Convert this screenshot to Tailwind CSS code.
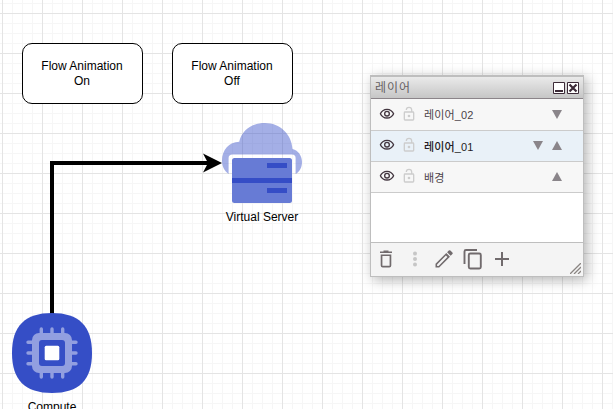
<!DOCTYPE html>
<html lang="ko">
<head>
<meta charset="utf-8">
<title>Diagram</title>
<script src="https://cdn.jsdelivr.net/npm/@tailwindcss/browser@4"></script>
</head>
<body class="w-[613px] h-[409px] overflow-hidden bg-white font-['Liberation_Sans','Noto_Sans_CJK_KR',sans-serif] text-black">
<svg width="0" height="0" class="absolute">
  <symbol id="eye" viewBox="0 0 24 24"><path d="M12 6c3.79 0 7.17 2.13 8.82 5.5C19.17 14.87 15.79 17 12 17s-7.17-2.13-8.82-5.5C4.83 8.13 8.21 6 12 6m0-2C7 4 2.73 7.11 1 11.500 2.730 15.890 7 19 12 19s9.270-3.110 11-7.500C21.270 7.110 17 4 12 4zm0 5a2.500 2.500 0 1 1 0 5 2.500 2.500 0 0 1 0-5m0-2a4.500 4.500 0 1 0 0 9 4.500 4.500 0 0 0 0-9z"/></symbol>
  <symbol id="lock" viewBox="0 0 24 24"><path d="M18 8h-1V6A5 5 0 0 0 7 6h1.900a3.100 3.100 0 0 1 6.200 0v2H6a2 2 0 0 0-2 2v10a2 2 0 0 0 2 2h12a2 2 0 0 0 2-2V10a2 2 0 0 0-2-2zm0 12H6V10h12v10zm-6-3a2 2 0 1 0 0-4 2 2 0 0 0 0 4z"/></symbol>
</svg>
<main class="relative w-[613px] h-[409px] overflow-hidden">
  <svg class="absolute inset-0" width="613" height="409">
    <defs>
      <pattern id="grid" x="2" y="13" width="40" height="40" patternUnits="userSpaceOnUse">
        <path d="M10.500 0V40M20.500 0V40M30.500 0V40M0 10.500H40M0 20.500H40M0 30.500H40" stroke="#f6f6f6"/>
        <path d="M.5 0V40M0 .5H40" stroke="#e4e4e4"/>
      </pattern>
    </defs>
    <rect width="613" height="409" fill="url(#grid)"/>
    <path d="M52 314V163H210" fill="none" stroke="#000" stroke-width="4"/>
    <path d="M222 163L203 172.500L208 163L203 153.500Z"/>
    <path d="M228.600 174C224.500 171 222 167 222 160.500C222 150 229 142 239.200 141.700C242 130 252 123 265 123C280 123 291.500 134 292.500 149C298.500 150.500 302 156 302 162C302 167.500 299.500 172 295.600 174V158Q295.600 154.500 292 154.500H232.500Q228.600 154.500 228.600 158Z" fill="#3850c8" fill-opacity=".46"/>
    <rect x="232" y="158" width="60" height="45" rx="2.500" fill="#677bd5"/>
    <path d="M232 178h60v5h-60zM267 163h20v5h-20zM267 188h20v5h-20z" fill="#354dc6"/>
    <path d="M52 313C79 313 92 326 92 353S79 393 52 393S12 380 12 353S25 313 52 313Z" fill="#354ec6"/>
    <path d="M41.300 329V377M52 329V377M62.700 329V377M28 342.300H76M28 353H76M28 363.700H76" stroke="#929fe0" stroke-width="3.400" stroke-linecap="round"/>
    <rect x="32" y="333" width="40" height="40" rx="7" fill="#929fe0"/>
    <rect x="39" y="340" width="26" height="26" rx="3" fill="#354ec6"/>
    <rect x="44.700" y="345.700" width="14.600" height="14.600" rx="1.500" fill="#fff"/>
  </svg>

  <div class="absolute left-[22px] top-[43px] w-[121px] h-[61px] rounded-[10px] border border-black bg-white flex items-center justify-center text-center text-[12px] leading-[15px] pr-[1px]">Flow Animation<br>On</div>
  <div class="absolute left-[172px] top-[43px] w-[121px] h-[61px] rounded-[10px] border border-black bg-white flex items-center justify-center text-center text-[12px] leading-[15px] pr-[1px]">Flow Animation<br>Off</div>
  <div class="absolute left-[212px] top-[210px] w-[100px] text-center text-[12px] leading-[15px]">Virtual Server</div>
  <div class="absolute left-[2px] top-[400px] w-[100px] text-center text-[12px] leading-[15px]">Compute</div>

  <section class="absolute left-[370px] top-[75px] w-[214px] h-[202px] flex flex-col border border-[#bebebe] border-t-2 bg-white shadow-[3px_3px_12px_rgba(0,0,0,0.3)]">
    <header class="h-[22px] shrink-0 flex items-center pl-[4px] pr-[4px] border-b border-[#8b8489] bg-linear-to-b from-[#eaeaea] to-[#c6c6c6] text-[12px] text-[#665f63]">
      <span class="grow leading-[20px] tracking-[1px] mt-px">레이어</span>
      <svg width="26" height="12" viewBox="0 0 26 12" fill="none" stroke="#3d2b38">
        <path d="M.5 .5h11v11H.5zM14.500 .5h11v11h-11z" fill="#fff"/>
        <path d="M2 9h8" stroke-width="2"/>
        <path d="M16.500 2.500l7 7M23.500 2.500l-7 7" stroke-width="2.200"/>
      </svg>
    </header>
    <div class="h-[32px] shrink-0 flex items-center border-b border-[#cbcbcb] bg-[#f7f7f7] text-[11px] text-[#4c4349]">
      <svg class="ml-[8px] mb-px size-4 fill-[#42353f]"><use href="#eye"/></svg>
      <svg class="ml-[6px] mb-[2px] size-4 fill-[#cdcdcd]"><use href="#lock"/></svg>
      <span class="ml-[7px] mt-[2px] grow tracking-[.15px]">레이어_02</span>
      <svg class="mr-[21px] mb-px" width="10" height="9"><path d="M0 0H10L5 9Z" fill="#8a858a"/></svg>
    </div>
    <div class="h-[31px] shrink-0 flex items-center border-b border-[#cbcbcb] bg-[#e9f1f8] text-[11px] text-[#251c25] font-medium">
      <svg class="ml-[8px] mb-[2px] size-4 fill-[#42353f]"><use href="#eye"/></svg>
      <svg class="ml-[6px] mb-[2px] size-4 fill-[#cdcdcd]"><use href="#lock"/></svg>
      <span class="ml-[7px] mt-[2px] grow tracking-[.15px]">레이어_01</span>
      <svg class="mr-[9px] mb-[2px]" width="10" height="9"><path d="M0 0H10L5 9Z" fill="#8a858a"/></svg>
      <svg class="mr-[21px] mb-[2px]" width="10" height="9"><path d="M0 9H10L5 0Z" fill="#8a858a"/></svg>
    </div>
    <div class="h-[31px] shrink-0 flex items-center border-b border-[#cbcbcb] bg-[#f7f7f7] text-[11px] text-[#4c4349]">
      <svg class="ml-[8px] mb-[2px] size-4 fill-[#42353f]"><use href="#eye"/></svg>
      <svg class="ml-[6px] mb-[2px] size-4 fill-[#cdcdcd]"><use href="#lock"/></svg>
      <span class="ml-[7px] mt-[2px] grow tracking-[.15px]">배경</span>
      <svg class="mr-[21px] mb-[2px]" width="10" height="9"><path d="M0 9H10L5 0Z" fill="#8a858a"/></svg>
    </div>
    <div class="grow"></div>
    <footer class="relative h-[34px] shrink-0 flex items-center border-t border-[#bebebe] bg-[#f4f4f4]">
      <svg width="148" height="33" fill="#716b6d">
        <path d="M9 10V8.500h3.500V7.500h5v1H21v1.500zM9.700 11.500h10.600v11q0 2-2 2h-6.600q-2 0-2-2zm1.700 1.600v9.700h7.200v-9.700z"/>
        <g fill="#c6c6c6"><circle cx="44" cy="10.500" r="2"/><circle cx="44" cy="16" r="2"/><circle cx="44" cy="21.500" r="2"/></g>
        <path fill-rule="evenodd" d="M64.500 24.500v-3.700L75.300 10l3.700 3.700L68.200 24.500zm1.600-1.600h1.500l8.800-8.800-1.500-1.500-8.800 8.800zM76.100 9.200l1.700-1.700q.8-.7 1.600 0l2 2q.7.800 0 1.600l-1.700 1.700z"/>
        <path d="M93.500 21V8.500q0-1.500 1.500-1.500H106M97.800 12q0-1.500 1.500-1.500h9q1.500 0 1.500 1.500v12q0 1.500-1.500 1.500h-9q-1.500 0-1.500-1.500z" fill="none" stroke="#716b6d" stroke-width="1.900"/>
        <path d="M124 15h6V9h2v6h6v2h-6v6h-2v-6h-6z"/>
      </svg>
      <svg class="absolute right-[2px] bottom-[2px]" width="11" height="11" stroke="#8a8582" stroke-width="1.300"><path d="M0 11L11 0M4 11L11 4M8 11L11 8"/></svg>
    </footer>
  </section>
</main>
</body>
</html>
